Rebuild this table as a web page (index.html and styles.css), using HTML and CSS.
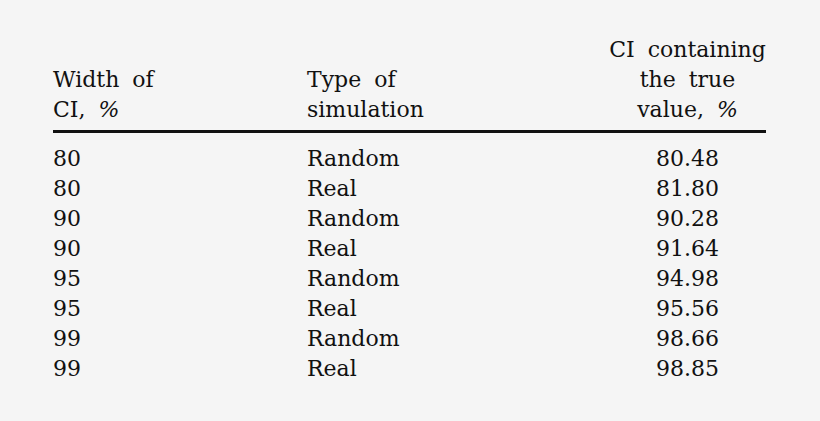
FILE: index.html
```html
<!DOCTYPE html>
<html lang="en">
<head>
<meta charset="utf-8">
<title>CI table</title>
<link rel="stylesheet" href="styles.css">
</head>
<body>
<div class="page">
  <div class="table">
    <div class="head">
      <div class="cell c1">Width of<br>CI, <span class="pct">%</span></div>
      <div class="cell c2">Type of<br>simulation</div>
      <div class="cell c3">CI containing<br>the true<br>value, <span class="pct">%</span></div>
    </div>
    <div class="body">
      <div class="row"><div class="cell c1">80</div><div class="cell c2">Random</div><div class="cell c3">80.48</div></div>
      <div class="row"><div class="cell c1">80</div><div class="cell c2">Real</div><div class="cell c3">81.80</div></div>
      <div class="row"><div class="cell c1">90</div><div class="cell c2">Random</div><div class="cell c3">90.28</div></div>
      <div class="row"><div class="cell c1">90</div><div class="cell c2">Real</div><div class="cell c3">91.64</div></div>
      <div class="row"><div class="cell c1">95</div><div class="cell c2">Random</div><div class="cell c3">94.98</div></div>
      <div class="row"><div class="cell c1">95</div><div class="cell c2">Real</div><div class="cell c3">95.56</div></div>
      <div class="row"><div class="cell c1">99</div><div class="cell c2">Random</div><div class="cell c3">98.66</div></div>
      <div class="row"><div class="cell c1">99</div><div class="cell c2">Real</div><div class="cell c3">98.85</div></div>
    </div>
  </div>
</div>
</body>
</html>
```
FILE: styles.css
```css
html, body {
  margin: 0;
  padding: 0;
  background: #f5f5f5;
}
.page {
  width: 820px;
  height: 421px;
  box-sizing: border-box;
  padding: 35px 0 0 53px;
  font-family: "DejaVu Serif", "Liberation Serif", serif;
  font-size: 22px;
  line-height: 30px;
  color: #111;
}
.table {
  width: 713px;
}
.head, .row {
  display: grid;
  grid-template-columns: 254px 302px 157px;
}
.head {
  align-items: end;
  padding-bottom: 5px;
  border-bottom: 3px solid #111;
  word-spacing: 6px;
}
.pct {
  font-style: italic;
}
.body {
  padding-top: 11px;
}
.c3 {
  text-align: center;
}
```
